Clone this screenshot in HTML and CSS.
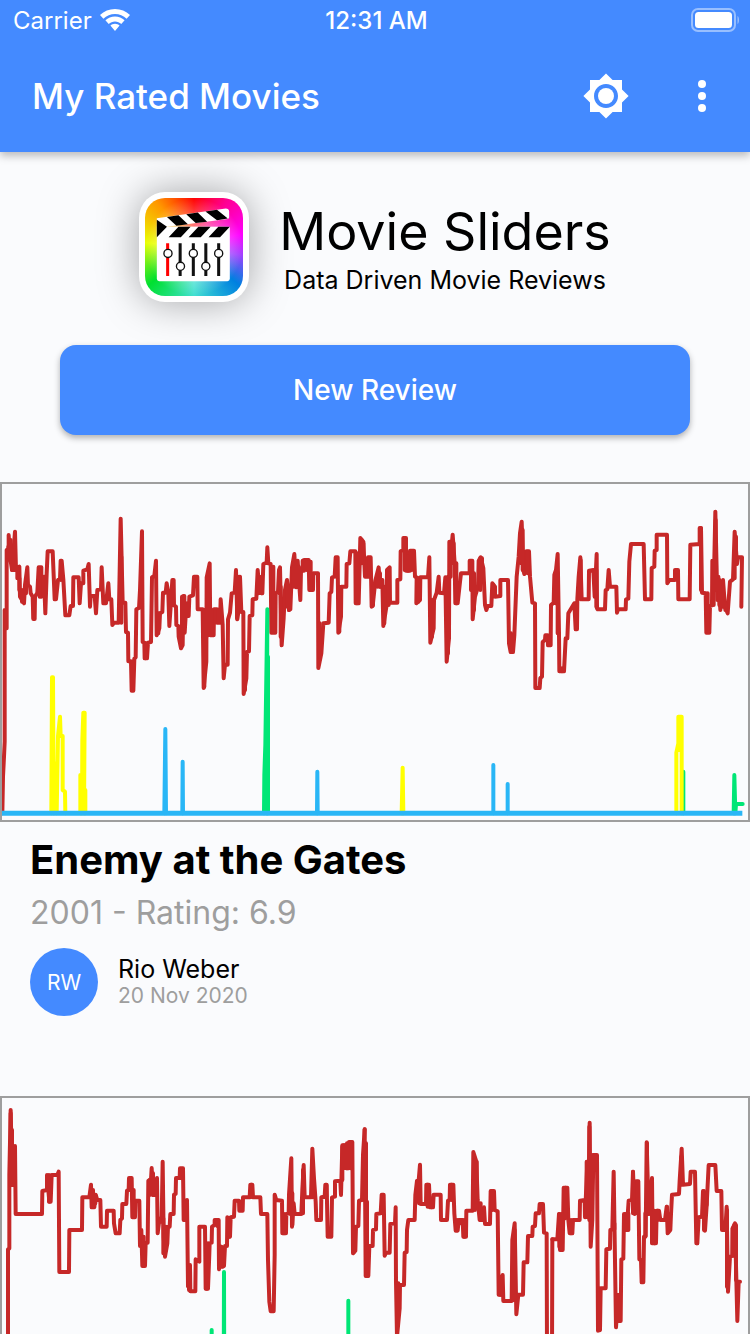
FILE: index.html
```html
<!DOCTYPE html>
<html lang="en">
<head>
<meta charset="utf-8">
<meta name="viewport" content="width=device-width, initial-scale=1">
<title>My Rated Movies</title>
<link rel="stylesheet" href="styles.css">
</head>
<body>
<div class="app">
  <header class="top">
    <div class="status">
      <div class="carrier">
        <span>Carrier</span>
        <svg width="30" height="22" viewBox="0 0 30 22" aria-hidden="true"><path fill="#fff" d="M15 0C9.200 0 4 2.200 0 6l3.400 3.700C6.500 6.700 10.600 5 15 5s8.500 1.700 11.600 4.700L30 6C26 2.200 20.800 0 15 0zM15 7.500c-3.700 0-7 1.400-9.600 3.800L8.700 15c1.700-1.600 3.900-2.500 6.300-2.500s4.600.9 6.300 2.500l3.300-3.700C22 8.900 18.700 7.500 15 7.500zM15 14.700c-1.800 0-3.400.7-4.600 1.800L15 22l4.600-5.500c-1.200-1.100-2.800-1.800-4.600-1.800z"/></svg>
      </div>
      <time class="clock">12:31 AM</time>
      <svg class="battery" width="50" height="24" viewBox="0 0 50 24" aria-hidden="true"><rect x="2" y="1" width="43" height="22" rx="6" fill="none" stroke="#fff" stroke-opacity=".45" stroke-width="2"/><rect x="5" y="4" width="37" height="16" rx="3.500" fill="#fff"/><path d="M47.500 8c2 1 2 7 0 8z" fill="#fff" fill-opacity=".45"/></svg>
    </div>
    <div class="toolbar">
      <h1 class="title">My Rated Movies</h1>
      <button class="icon-button" aria-label="Brightness">
        <svg width="48" height="48" viewBox="0 0 24 24"><path fill="#fff" d="M20 15.310L23.310 12 20 8.690V4h-4.690L12 .690 8.690 4H4v4.690L.690 12 4 15.310V20h4.690L12 23.310 15.310 20H20v-4.690zM12 18c-3.310 0-6-2.690-6-6s2.690-6 6-6 6 2.690 6 6-2.690 6-6 6z"/><circle cx="12" cy="12" r="4" fill="#fff"/></svg>
      </button>
      <button class="icon-button" aria-label="More options">
        <svg width="48" height="48" viewBox="0 0 24 24" fill="#fff"><circle cx="12" cy="6" r="2"/><circle cx="12" cy="12" r="2"/><circle cx="12" cy="18" r="2"/></svg>
      </button>
    </div>
  </header>
  <main class="content">
    <section class="brand">
      <div class="logo">
        <div class="logo-art">
          <svg viewBox="43 40 290 290" aria-hidden="true">
            <defs><radialGradient id="glow"><stop offset="0" stop-color="#fff" stop-opacity=".8"/><stop offset="1" stop-color="#fff" stop-opacity="0"/></radialGradient></defs>
            <circle cx="188" cy="185" r="145" fill="url(#glow)"/>
            <path d="M78 124V280a7 7 0 0 0 7 6H287a7 7 0 0 0 7-6V125z" fill="#fff"/>
            <path d="M78 100 282 71q9 0 10 8v18q0 4-4 5L108 125 78 156z" fill="#fff"/>
            <path fill="#000" d="M78 104 108 125 78 156zM108 96l34-5 28 27-34 4zM165 88l34-5 28 27-34 4zM222 80l34-5 32 26-32 5zM142 125h36l-29 31h-36zM201 125h36l-29 31h-36zM260 125h34l-29 31h-34z"/>
            <g stroke="#111" stroke-width="9"><path stroke="red" d="M110 174V271"/><path d="M147 174V271M186 174V271M223 174V271M261 174V271"/><g fill="#fff" stroke-width="4"><circle cx="111" cy="204" r="12"/><circle cx="148" cy="242" r="12"/><circle cx="186" cy="204" r="12"/><circle cx="223" cy="242" r="12"/><circle cx="261" cy="204" r="12"/></g></g>
          </svg>
        </div>
      </div>
      <div class="brand-text">
        <h2 class="brand-name">Movie Sliders</h2>
        <p class="tagline">Data Driven Movie Reviews</p>
      </div>
    </section>
    <button class="new-review">New Review</button>

    <article class="review">
      <svg class="chart" viewBox="6 -18 2238 1008" preserveAspectRatio="none" role="img" aria-label="Enemy at the Gates rating chart">
        <polyline class="red" points="7,970 9,860 12,800 14,755 14,360 20,415 20,180 26,175 26,135 30,200 36,240 45,125 48,240 58,230 60,320 72,340 75,285 82,232 84,285 90,290 92,310 98,320 100,387 104,387 105,320 112,308 116,232 124,232 124,320 132,260 136,370 140,250 143,184 158,184 164,328 168,328 174,270 180,268 182,212 185,212 190,268 196,376 208,376 212,348 219,348 220,262 236,262 239,340 243,280 250,280 250,242 262,238 266,222 270,350 272,318 284,318 288,370 292,300 303,298 305,232 310,340 318,340 325,280 328,328 334,328 337,405 342,398 356,398 362,86 368,338 376,338 378,426 384,428 385,514 393,514 395,602 400,602 403,506 407,502 409,358 417,354 420,300 426,124 428,456 433,458 434,505 441,505 444,458 453,456 456,262 463,258 468,212 470,436 478,415 480,370 487,366 489,308 497,308 500,280 505,310 508,408 512,350 517,270 521,270 522,346 528,350 529,405 535,408 536,440 543,475 548,465 550,318 553,318 554,428 557,378 566,378 568,320 579,316 582,260 592,260 593,358 608,358 611,594 619,515 620,262 629,220 631,436 641,436 642,358 651,358 651,398 660,398 662,328 668,404 671,565 675,524 683,524 684,388 690,368 695,310 704,308 708,240 712,388 716,360 720,260 724,366 730,366 731,612 739,565 741,486 747,484 749,378 757,376 758,328 769,326 773,240 779,308 787,310 790,222 800,218 802,172 805,220 812,222 814,428 826,428 827,310 834,305 837,240 840,232 845,466 851,384 855,300 861,270 867,360 871,358 876,232 883,192 889,292 893,212 901,330 903,242 912,242 912,210 926,210 928,300 939,300 940,250 954,250 955,534 964,490 970,400 986,398 989,310 994,306 996,262 1004,260 1007,202 1013,202 1015,428 1023,380 1024,290 1039,290 1040,222 1048,220 1051,184 1066,184 1067,340 1076,340 1081,144 1090,155 1095,260 1103,260 1104,202 1112,202 1115,350 1118,348 1126,272 1136,232 1140,290 1147,270 1150,408 1160,345 1161,240 1169,232 1170,338 1192,338 1192,270 1201,268 1202,184 1210,180 1210,144 1218,144 1218,242 1230,242 1230,182 1242,182 1245,260 1250,262 1249,340 1260,330 1261,262 1284,262 1288,202 1291,458 1301,415 1302,330 1310,308 1316,260 1318,308 1332,310 1336,262 1340,515 1347,445 1348,155 1356,155 1358,134 1364,220 1366,340 1373,340 1380,275 1383,250 1409,250 1409,212 1417,212 1418,388 1425,320 1434,290 1436,212 1442,202 1450,235 1455,345 1459,360 1463,348 1474,348 1477,280 1485,290 1485,320 1501,318 1501,270 1524,270 1527,460 1532,486 1539,486 1543,436 1550,260 1556,200 1560,130 1565,95 1570,240 1573,252 1579,184 1587,184 1590,260 1597,338 1605,340 1606,594 1619,594 1621,564 1626,560 1628,456 1635,450 1636,436 1643,436 1644,466 1652,466 1653,345 1661,338 1663,255 1668,240 1673,192 1677,430 1678,544 1692,544 1697,445 1702,445 1705,370 1714,355 1723,340 1727,418 1731,418 1732,328 1736,260 1741,202 1745,328 1766,328 1767,242 1780,240 1784,320 1790,192 1791,355 1793,358 1815,358 1817,300 1822,298 1826,240 1830,290 1849,290 1851,368 1854,358 1877,358 1878,328 1885,326 1888,215 1893,162 1931,162 1935,328 1954,328 1955,234 1963,230 1964,182 1970,180 1970,134 2001,134 2002,280 2008,270 2025,270 2025,240 2034,240 2035,328 2069,328 2071,164 2099,162 2099,114 2103,114 2106,308 2117,310 2119,428 2128,428 2130,348 2136,346 2137,212 2143,208 2146,65 2152,330 2155,260 2161,360 2169,270 2175,350 2183,370 2190,275 2199,268 2204,125 2211,222 2214,202 2226,202 2224,350"/>
        <path class="red" d="M25 170V200M32 150V200M36 200V240M43 180V240M52 235V265M58 265V300M66 300V335M78 280V310M101 330V385M119 235V320M183 215V270M361 200V340M364 200V398M397 515V600M437 460V505M475 370V430M546 320V465M561 378V340M613 360V590M616 360V515M626 262V436M635 360V434M656 360V395M711 260V385M717 260V360M735 490V600M776 270V310M784 260V310M820 230V426M838 290V310M842 290V440M862 280V350M867 300V360M880 232V290M886 230V290M896 230V290M908 212V240M920 215V240M932 215V300M959 400V500M1010 205V260M1018 290V425M1071 190V340M1085 150V220M1090 160V220M1108 205V260M1119 290V345M1132 270V290M1140 250V290M1153 290V400M1166 250V345M1214 150V240M1224 200V242M1236 185V240M1255 265V335M1296 330V440M1344 260V490M1352 160V260M1361 160V220M1369 220V340M1413 215V300M1422 250V360M1441 205V300M1446 205V260M1480 285V318M1533 430V485M1563 120V220M1568 120V240M1583 185V250M1648 440V465M1666 250V340M1670 240V340M1673 250V430M1686 535V544M1728 340V415M1738 260V325M1742 210V328M1786 240V320M1789 240V350M2103 115V300M2123 310V425M2141 215V345M2147 90V300M2158 270V345M2168 290V350M2176 340V360M2204 200V265M2208 140V222"/>
        <path class="green" d="M792 970 793 855 796 765 802 358 800 970 804 500V970M2049 970 2050 845 2050 970M2201 970 2203 855 2206 970 2208 942H2228"/>
        <path class="yellow" d="M154 970 156 562 159 562 161 970 168 820 170 970 174 738 180 680 182 738 188 738 188 900 195 905 196 970M241 970 241 855 246 970 247 750 250 668 254 668 252 970 256 900V970M1205 970 1208 833 1210 970M2029 970V788L2035 760V680H2045V970M2040 680V780"/>
        <path class="blue" d="M493 970 496 717 498 970M547 970 548 815 549 970M951 970 952 845 953 970M1480 970V825M1523 970V882"/>
        <path class="blue base" d="M6 970H2227"/>
      </svg>
      <div class="details">
        <h3 class="movie">Enemy at the Gates</h3>
        <p class="rating">2001 - Rating: 6.9</p>
        <div class="author">
          <span class="avatar">RW</span>
          <div>
            <p class="name">Rio Weber</p>
            <p class="date">20 Nov 2020</p>
          </div>
        </div>
      </div>
    </article>

    <article class="review">
      <svg class="chart" viewBox="6 24 2238 1008" preserveAspectRatio="none" role="img" aria-label="Movie rating chart">
        <polyline class="red" points="24,970 24,478 28,475 28,255 32,60 37,285 45,168 47,372 126,372 127,303 141,300 141,255 148,335 152,335 155,255 172,255 176,245 178,546 207,546 208,420 246,420 247,322 268,322 273,284 275,352 283,352 287,314 292,330 301,330 303,410 320,410 321,362 341,362 342,400 347,430 359,430 361,390 366,385 367,342 379,342 381,302 386,300 387,264 395,264 397,382 405,382 406,332 418,332 420,468 424,420 427,528 435,528 437,458 443,458 445,272 453,268 455,234 459,315 467,315 471,264 473,430 478,390 485,385 488,215 491,440 495,500 502,460 504,410 509,410 511,372 521,372 522,314 527,312 528,264 539,264 540,235 549,235 551,390 557,390 561,330 564,588"/>
        <path class="red" d="M32 70V285M36 120V285M41 170V285M147 255V335M279 300V350M286 315V340M391 265V300M401 300V380M431 440V525M449 270V315M459 250V315M482 385V395M490 385V490M498 410V480M544 240V265M554 335V390"/>
        <g transform="translate(540 0)">
          <polyline class="red" points="24,588 30,525 31,604 46,604 47,508 58,515 58,410 75,410 77,596 84,596 88,490 89,460 95,458 96,410 104,405 104,390 116,390 117,538 123,470 128,530 132,528 135,468 141,468 142,382 150,440 152,382 162,380 164,332 177,332 178,362 188,362 189,322 209,322 211,284 217,284 219,322 241,322 243,372 262,372 264,510 268,635 272,664 281,664 284,495 284,314 289,330 306,332 307,430 318,430 319,372 326,370 327,314 334,205 336,410 341,340 344,372 364,372 367,300 371,225 374,322 393,322 397,176 402,265 407,335 409,390 423,390 424,322 434,320 436,284 440,284 443,440 454,440 456,322 465,320 465,274 481,272 483,315 487,166 496,166 500,235 505,235 507,156 517,156 519,490 526,482 528,410 535,408 537,332 546,330 549,195 554,118"/>
          <path class="red" d="M17 335V390M27 530V600M80 490V596M84 460V590M112 390V408M124 470V530M147 385V440M214 284V320M312 372V430M331 310V372M337 310V405M369 240V370M398 240V322M439 285V320M487 170V270M492 166V235M501 160V235M512 156V235M522 410V485M552 160V330M558 160V330M561 335V558"/>
          <path class="green" d="M131 970 132 546 133 970M95 970V720M505 970V632"/>
        </g>
        <g transform="translate(1080 0)">
          <polyline class="red" points="14,118 17,558 25,558 28,468 38,468 39,420 48,418 49,372 62,370 65,314 71,314 74,497 78,488 89,488 91,402 105,400 107,352 108,575 111,740 119,655 120,585 132,585 134,488 140,486 141,420 145,390 164,390 166,315 171,272 176,272 180,224 182,342 198,342 199,284 207,284 210,352 219,352 221,314 242,314 243,390 261,390 264,332 269,330 270,284 280,284 283,370 287,422 293,422 296,390 308,390 310,440 318,440 319,362 338,362 340,186 349,215 353,330 359,390 367,390 372,352 375,402 390,402 392,303 402,303 404,360 413,364 416,614 423,614 428,555 430,633 455,633 457,450 464,400 469,673 475,614 489,614 491,517 502,517 504,438 517,438 518,410 525,408 527,370 537,370 539,342 549,342 552,428 560,430 561,800 576,800 577,448"/>
          <path class="red" d="M20 470V555M68 315V370M111 580V740M115 580V655M172 275V315M177 272V340M203 284V350M214 345V352M275 284V330M291 390V420M302 390V400M313 390V440M345 210V360M350 215V330M362 340V390M370 370V390M397 303V360M420 560V614M425 560V614M459 450V630M464 420V630"/>
        </g>
        <g transform="translate(1650 0)">
          <polyline class="red" points="7,448 22,448 27,372 30,480 38,480 41,293 52,293 55,390 59,430 67,430 69,390 89,390 90,332 104,330 105,382 112,215 114,382 119,98 122,470 127,390 130,195 141,195 144,722 150,720 152,595 167,595 169,478 180,476 181,420 187,418 191,245 198,712 204,615 204,693 212,693 214,508 220,506 222,372 226,372 230,420 236,332 246,330 249,245 254,372 258,274 265,274 268,508 273,510 275,577 280,577 282,440 287,438 290,157 296,372 306,264 308,460 318,460 320,362 327,362 331,390 345,390 350,350 353,430 361,420 363,372 366,314 387,312 389,272 395,176 399,284 420,282 422,245 435,245 439,460 442,460 446,382 456,380 459,303 465,422 470,345 476,225 496,225 500,303 514,303 516,420 526,420 530,350 534,605 540,500 547,497 548,415 555,400 562,693 566,575 570,575"/>
          <path class="red" d="M28 372V470M34 372V480M46 293V385M63 390V430M110 215V380M118 110V390M125 195V390M136 195V240M148 600V720M193 400V418M198 620V700M207 615V690M229 375V420M235 370V420M249 245V370M262 275V370M277 510V575M286 370V440M291 160V372M301 372V365M306 372V460M313 362V460M323 362V390M351 350V390M357 372V420M394 200V284M441 385V460M462 303V420M470 310V345M531 360V590M548 415V497M553 405V497M558 405V570"/>
        </g>
      </svg>
    </article>
  </main>
</div>
</body>
</html>
```

FILE: styles.css
```css
* { box-sizing: border-box; }
body, h1, h2, h3, p { margin: 0; }
body {
  background: #fafbfd;
  color: #000;
  font-family: Inter, "Liberation Sans", sans-serif;
}
button { border: 0; font: inherit; cursor: pointer; }
svg { display: block; }

.app { display: flex; flex-direction: column; height: 100vh; }

.top {
  position: relative;
  z-index: 1;
  flex: none;
  background: #448aff;
  color: #fff;
  box-shadow: 0 4px 8px rgba(0, 0, 0, .25);
}
.status {
  display: grid;
  grid-template-columns: 1fr auto 1fr;
  align-items: center;
  height: 40px;
  padding: 0 10px 0 13px;
}
.carrier { display: flex; align-items: center; gap: 8px; font-size: 24px; }
.clock { font-size: 24px; font-weight: 500; }
.battery { justify-self: end; }
.toolbar {
  display: flex;
  align-items: center;
  height: 112px;
  padding-left: 32px;
}
.title { flex: 1; font-size: 35px; font-weight: 500; }
.icon-button {
  display: grid;
  place-items: center;
  width: 96px;
  height: 96px;
  padding: 0;
  background: none;
}

.content {
  flex: 1;
  min-height: 0;
  overflow-y: auto;
  scrollbar-width: none;
}
.brand {
  display: flex;
  justify-content: center;
  align-items: center;
  gap: 30px;
  padding: 40px 0 43px;
}
.logo {
  width: 110px;
  height: 110px;
  padding: 6px;
  border-radius: 26px;
  background: #fff;
  box-shadow: 0 0 40px rgba(0, 0, 0, .35);
}
.logo-art {
  height: 98px;
  border-radius: 20px;
  overflow: hidden;
  background: conic-gradient(from 0deg, red, #ff0090 35deg, #f0f 75deg, #a040ff 100deg, #0080e0 130deg, #40e0d0 180deg, #00e030 230deg, #e8ff00 275deg, #ff9800 320deg, red);
}
.brand-text { padding-top: 2px; text-align: center; }
.brand-name { font-size: 52px; font-weight: 400; line-height: 64px; }
.tagline { font-size: 25px; line-height: 32px; }

.new-review {
  display: block;
  width: calc(100% - 120px);
  height: 90px;
  margin: 0 auto 47px;
  border-radius: 16px;
  background: #448aff;
  color: #fff;
  font-size: 28px;
  font-weight: 500;
  box-shadow: 0 3px 6px rgba(0, 0, 0, .3);
}

.chart {
  width: 100%;
  height: 340px;
  border: 2px solid #9e9e9e;
}
.chart polyline, .chart path {
  fill: none;
  stroke-width: 4px;
  stroke-linecap: round;
  stroke-linejoin: round;
  vector-effect: non-scaling-stroke;
}
.chart .red { stroke: #c62828; }
.chart .green { stroke: #00e676; }
.chart .yellow { stroke: #ff0; }
.chart .blue { stroke: #29b6f6; }
.chart .base { stroke-width: 5px; stroke-linecap: butt; }

.details { padding: 12px 30px 80px; }
.movie { font-size: 40px; font-weight: 700; line-height: 52px; }
.rating { color: #9e9e9e; font-size: 32px; line-height: 54px; }
.author { display: flex; align-items: center; gap: 20px; margin-top: 8px; }
.avatar {
  display: grid;
  place-items: center;
  width: 68px;
  height: 68px;
  border-radius: 50%;
  background: #448aff;
  color: #fff;
  font-size: 21px;
}
.name { font-size: 25px; line-height: 28px; }
.date { color: #9e9e9e; font-size: 21px; line-height: 26px; }
```
